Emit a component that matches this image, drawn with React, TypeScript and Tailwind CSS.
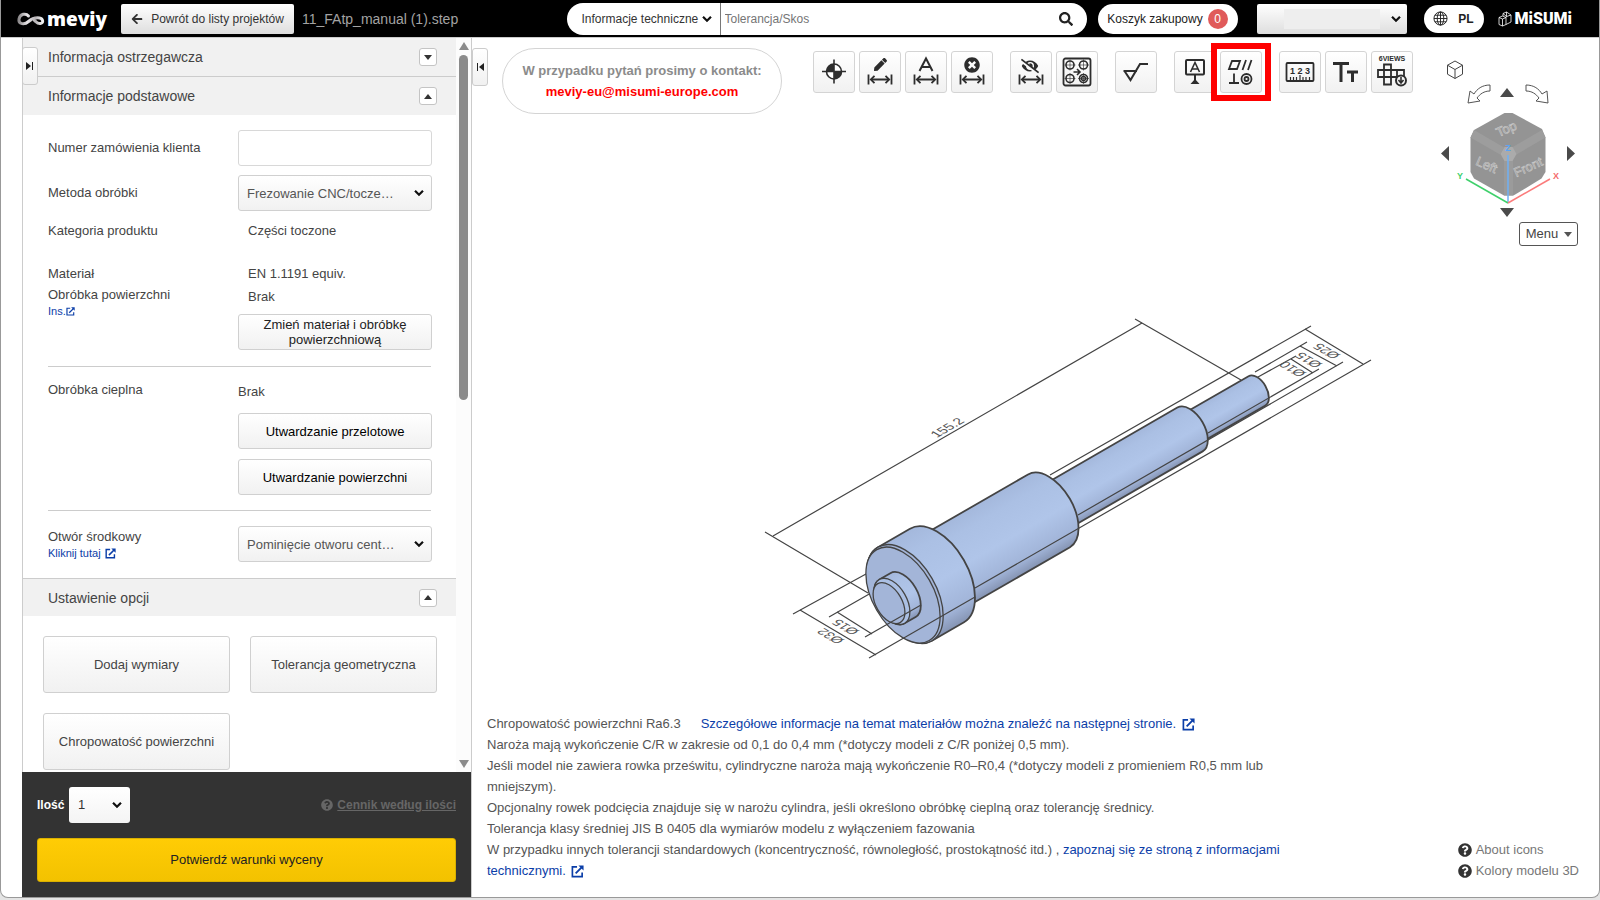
import React from 'react';
import { FaArrowLeft, FaSearch, FaQuestionCircle, FaPen, FaTimesCircle, FaEyeSlash } from 'react-icons/fa';
import { clsx } from 'clsx';

const INK = '#2d2d2d';

/* ---------- small shared pieces ---------- */

const Chevron = ({ className }: { className?: string }) => (
  <svg viewBox="0 0 10 7" className={clsx('pointer-events-none h-[7px] w-[10px]', className)} fill="none" stroke="#111" strokeWidth="2.2">
    <path d="M1 1.2 5 5.2 9 1.2" />
  </svg>
);

const LinkIcon = ({ className }: { className?: string }) => (
  <svg viewBox="0 0 14 14" className={clsx('inline-block', className)} fill="none" stroke="#0b3ea8" strokeWidth="1.8">
    <path d="M6.5 2H1.5v10.5H12V8" />
    <path d="M5 9 11.5 2.5" strokeWidth="2" />
    <path d="M8 .5h5.5V6z" fill="#0b3ea8" stroke="none" />
  </svg>
);

interface SelectBoxProps {
  id: string;
  options: string[];
  label?: string;
  className?: string;
  selectClassName?: string;
}

const SelectBox = ({ id, options, label, className, selectClassName }: SelectBoxProps) => (
  <div className={clsx('relative', className)}>
    <select id={id} aria-label={label} className={clsx('h-full w-full appearance-none outline-none', selectClassName)}>
      {options.map((option) => (
        <option key={option}>{option}</option>
      ))}
    </select>
    <Chevron className="absolute top-1/2 right-2 -translate-y-1/2" />
  </div>
);

const panelButton =
  'rounded-[3px] border border-[#d0d0d0] bg-linear-to-b from-white to-[#f1f1f1] text-[13px] leading-[15px]';

/* ---------- header ---------- */

const MeviyLogo = () => (
  <a href="#" className="flex w-[105px] items-center gap-px" aria-label="meviy">
    <svg viewBox="0 0 30 16" className="h-4 w-[30px]" fill="none">
      <defs>
        <linearGradient id="loop" x1="0" x2="1">
          <stop offset="0" stopColor="#8d8a8c" />
          <stop offset="0.35" stopColor="#e8e6e8" />
          <stop offset="0.7" stopColor="#b7b3b6" />
          <stop offset="1" stopColor="#f2f2f2" />
        </linearGradient>
      </defs>
      <path
        d="M12.500 5C10 2 4 2.500 3 8s5.500 6 9.500 2.500S20 6.500 23.500 7s4.500 5 1 5.500-4-1.500-6-3"
        stroke="url(#loop)"
        strokeWidth="3"
        strokeLinecap="round"
      />
    </svg>
    <span className="font-['Open_Sans',sans-serif] text-[19px] leading-5 font-extrabold text-white">meviy</span>
  </a>
);

const Globe = () => (
  <svg viewBox="0 0 16 16" className="size-[15px]" fill="none" stroke="#222" strokeWidth="1">
    <circle cx="8" cy="8" r="7" />
    <ellipse cx="8" cy="8" rx="3.5" ry="7" />
    <path d="M8 1v14M1 8h14M2 4.5h12M2 11.5h12" />
  </svg>
);

const MisumiLogo = () => (
  <a href="#" className="flex items-center gap-[3px]" aria-label="MISUMI">
    <svg viewBox="0 0 14 16" className="h-4 w-[14px]" fill="none" stroke="#fff" strokeWidth="0.8">
      <path d="M1 6.5 4.5 5 8 6.5v7L4.5 15 1 13.5zM1 6.5 4.5 8 8 6.5M4.5 8v7" />
      <path d="M5 5.2V2.5L8.5 1 13 4v7L8 13.5M8.5 1v4.5L13 4M8.5 5.5 8 6.5M5 2.5l3.5 3" />
    </svg>
    <span className="font-['Roboto',sans-serif] text-[16px] leading-5 font-black text-white">MiSUMi</span>
  </a>
);

const Header = () => (
  <header className="flex h-[37px] shrink-0 items-center bg-black pr-[27px] pl-[15px]">
    <MeviyLogo />
    <button className="flex h-[30px] w-[173px] items-center justify-center gap-2 rounded-[2px] bg-linear-to-b from-white to-[#dedede] text-xs text-[#333]">
      <FaArrowLeft className="size-3" />
      Powrót do listy projektów
    </button>
    <span className="ml-2 text-sm text-[#a3a3a3]">11_FAtp_manual (1).step</span>

    <div className="ml-auto flex items-center">
      <form className="flex h-8 w-[520px] items-center overflow-hidden rounded-full bg-white" onSubmit={(e) => e.preventDefault()}>
        <SelectBox
          id="search-scope"
          label="Zakres"
          options={['Informacje techniczne']}
          className="h-full w-[154px] border-r border-[#777]"
          selectClassName="pl-[15px] text-xs text-[#333]"
        />
        <input aria-label="Szukaj" placeholder="Tolerancja/Skos" className="h-full flex-1 px-1 text-xs outline-none placeholder:text-[#757575]" />
        <button aria-label="Szukaj" className="pr-[14px]">
          <FaSearch className="size-[14px] text-[#222]" />
        </button>
      </form>
      <button className="ml-[11px] flex h-[30px] w-[140px] items-center justify-center gap-[5px] rounded-full bg-white text-xs text-[#222]">
        Koszyk zakupowy
        <span className="flex size-5 items-center justify-center rounded-full bg-[#e05a5a] text-white">0</span>
      </button>
      <div className="relative ml-[19px] h-[30px] w-[150px]">
        <select aria-label="Konto" className="h-full w-full appearance-none rounded-[2px] bg-linear-to-b from-white to-[#dedede] outline-none">
          <option></option>
        </select>
        <span className="pointer-events-none absolute inset-y-[5px] left-[27px] w-24 bg-[#eee]" />
        <Chevron className="absolute top-1/2 right-[6px] -translate-y-1/2" />
      </div>
      <button className="mr-[14px] ml-[17px] flex h-7 w-[60px] items-center justify-center gap-[10px] rounded-full bg-white text-xs font-bold text-[#222]">
        <Globe />
        PL
      </button>
      <MisumiLogo />
    </div>
  </header>
);

/* ---------- sidebar ---------- */

interface SectionHeaderProps {
  title: string;
  open?: boolean;
  className?: string;
}

const SectionHeader = ({ title, open, className }: SectionHeaderProps) => (
  <div className={clsx('flex items-center justify-between bg-[#f1f1f1] pr-[19px] pl-[25px]', className)}>
    <h2 className="text-sm text-[#444]">{title}</h2>
    <button aria-label={title} aria-expanded={open} className="flex size-[18px] items-center justify-center rounded-[3px] border border-[#c4c4c4] bg-white">
      <svg viewBox="0 0 8 5" className={clsx('h-[5px] w-2', open && 'rotate-180')}>
        <path d="M0 0h8L4 5z" fill="#333" />
      </svg>
    </button>
  </div>
);

const BasicInfo = () => (
  <div className="px-[25px] text-[13px] leading-5 text-[#444]">
    <div className="grid grid-cols-[190px_194px] pt-[15px]">
      <label htmlFor="order-no" className="flex items-center">Numer zamówienia klienta</label>
      <input id="order-no" className="h-9 rounded-[3px] border border-[#d8d8d8] px-2 outline-none" />
    </div>
    <div className="mt-[9px] grid grid-cols-[190px_194px]">
      <label htmlFor="method" className="flex items-center">Metoda obróbki</label>
      <SelectBox id="method" options={['Frezowanie CNC/tocze…']} className="h-9" selectClassName={clsx(panelButton, 'pl-2 text-[#555]')} />
    </div>
    <div className="mt-[10px] grid grid-cols-[200px_184px]">
      <span>Kategoria produktu</span>
      <span>Części toczone</span>
    </div>
    <div className="mt-[23px] grid grid-cols-[200px_184px]">
      <span>Materiał</span>
      <span>EN 1.1191 equiv.</span>
    </div>
    <div className="mt-px grid grid-cols-[190px_194px] border-b border-[#ccc] pb-4">
      <div>
        Obróbka powierzchni
        <a href="#" className="flex items-center text-[11px] leading-3 text-[#0b3ea8]">
          Ins.
          <LinkIcon className="size-[9px]" />
        </a>
      </div>
      <div>
        <div className="pt-[2px] pb-[7px] pl-[10px]">Brak</div>
        <button className={clsx(panelButton, 'h-9 w-full px-4 text-[#222]')}>Zmień materiał i obróbkę powierzchniową</button>
      </div>
    </div>
    <div className="grid grid-cols-[190px_194px] border-b border-[#ccc] pt-[13px] pb-[15px]">
      <span>Obróbka cieplna</span>
      <div className="flex flex-col gap-[10px]">
        <span className="pt-[2px] pb-px">Brak</span>
        <button className={clsx(panelButton, 'h-9 text-black')}>Utwardzanie przelotowe</button>
        <button className={clsx(panelButton, 'h-9 text-black')}>Utwardzanie powierzchni</button>
      </div>
    </div>
    <div className="grid grid-cols-[190px_194px] pt-[15px] pb-4">
      <div className="pt-px">
        <label htmlFor="center-hole">Otwór środkowy</label>
        <a href="#" className="flex items-center gap-1 text-[11px] leading-3 text-[#0b3ea8]">
          Kliknij tutaj
          <LinkIcon className="size-[11px]" />
        </a>
      </div>
      <SelectBox id="center-hole" options={['Pominięcie otworu cent…']} className="h-9" selectClassName={clsx(panelButton, 'pl-2 text-[#555]')} />
    </div>
  </div>
);

const OPTION_BUTTONS = ['Dodaj wymiary', 'Tolerancja geometryczna', 'Chropowatość powierzchni'];

const Sidebar = () => (
  <aside className="relative flex w-[449px] shrink-0 flex-col border-l border-[#ccc]">
    <div className="flex min-h-0 flex-1">
      <div className="min-h-0 flex-1 overflow-hidden">
        <SectionHeader title="Informacja ostrzegawcza" className="h-[39px] border-b border-[#ccc]" />
        <SectionHeader title="Informacje podstawowe" open className="h-[38px]" />
        <BasicInfo />
        <SectionHeader title="Ustawienie opcji" open className="h-[38px] border-t border-[#ccc]" />
        <div className="grid grid-cols-2 gap-5 py-5 pr-[19px] pl-5">
          {OPTION_BUTTONS.map((label) => (
            <button key={label} className={clsx(panelButton, 'h-[57px] text-[#444]')}>{label}</button>
          ))}
        </div>
      </div>
      {/* Scroll track */}
      <div className="flex w-[15px] flex-col items-center bg-[#fcfcfc] pt-1 pb-1">
        <svg viewBox="0 0 10 8" className="h-2 w-[10px]"><path d="M5 0 10 8H0z" fill="#8b8b8b" /></svg>
        <div className="mt-[5px] h-[345px] w-[9px] rounded-full bg-[#8b8b8b]" />
        <svg viewBox="0 0 10 8" className="mt-auto h-2 w-[10px]"><path d="M0 0h10L5 8z" fill="#8b8b8b" /></svg>
      </div>
    </div>

    <div className="-ml-px bg-[#333] p-[15px] text-[13px]">
      <div className="flex items-center">
        <label htmlFor="qty" className="w-8 text-xs font-bold text-white">Ilość</label>
        <SelectBox id="qty" options={['1']} className="h-9 w-[61px]" selectClassName="rounded-[3px] bg-linear-to-b from-white to-[#f4f4f4] pl-[9px] text-[#333]" />
        <a href="#" className="ml-auto flex items-center gap-1 text-xs font-bold text-[#666]">
          <FaQuestionCircle className="size-3" />
          <span className="underline">Cennik według ilości</span>
        </a>
      </div>
      <button className="mt-[15px] h-11 w-full rounded-[3px] border border-[#d9b000] bg-linear-to-b from-[#ffcc05] to-[#f3c200] text-[#222]">
        Potwierdź warunki wyceny
      </button>
    </div>

    <button aria-label="Zwiń panel" className="absolute top-[9px] -left-px flex h-[38px] w-4 items-center justify-center rounded-[3px] border border-[#ccc] bg-linear-to-b from-white to-[#f1f1f1]">
      <svg viewBox="0 0 8 8" className="size-2"><path d="M0 0l5 4-5 4zM6 0h1v8H6z" fill="#222" /></svg>
    </button>
  </aside>
);

/* ---------- toolbar icons, all on a 34px grid ---------- */

const Span = () => (
  <g stroke={INK} strokeWidth="1.8" fill="none">
    <path d="M5.5 19.5v10M28.5 19.5v10M8 24.5h18" />
    <path d="M11.5 20.8 7.8 24.5l3.7 3.7M22.5 20.8l3.7 3.7-3.7 3.7" />
  </g>
);

const TOOL_GROUPS: { name: string; icon: React.ReactNode; marked?: boolean }[][] = [
  [
    {
      name: 'Punkt odniesienia',
      icon: (
        <g>
          <circle cx="17" cy="16.5" r="7.5" fill="#fff" stroke={INK} strokeWidth="1.6" />
          <path d="M17 16.5V9a7.5 7.5 0 0 0-7.5 7.5zM17 16.5V24a7.5 7.5 0 0 0 7.5-7.5z" fill={INK} />
          <path d="M17 4.5v24M5 16.5h24" stroke={INK} strokeWidth="1.6" />
        </g>
      ),
    },
    { name: 'Edytuj wymiar', icon: <g><Span /><FaPen x="11" y="3" size={13} color={INK} /></g> },
    { name: 'Auto wymiar', icon: <g><Span /><path d="M10.5 16 17 3.5 23.5 16M13 12h8" fill="none" stroke={INK} strokeWidth="2" /></g> },
    { name: 'Usuń wymiar', icon: <g><Span /><FaTimesCircle x="9" y="2" size={16} color={INK} /></g> },
  ],
  [
    { name: 'Ukryj wymiary', icon: <g><Span /><FaEyeSlash x="7" y="2" size={18} color={INK} /></g> },
    {
      name: 'Szyk otworów',
      icon: (
        <g fill="none" stroke={INK}>
          <rect x="3.5" y="3.5" width="27" height="27" rx="2" strokeWidth="1.8" />
          {[[10, 10], [23.5, 10], [10, 23.5], [23.5, 23.5]].map(([x, y]) => (
            <g key={`${x}-${y}`}>
              <circle cx={x} cy={y} r="4" strokeWidth="1.6" />
              <path d={`M${x - 5.5} ${y}h11M${x} ${y - 5.5}v11`} strokeWidth="0.6" />
            </g>
          ))}
          <circle cx="23.5" cy="23.5" r="2" strokeWidth="1.6" />
          <path d="M13.5 17h6M17 14l3 3-3 3" strokeWidth="1.6" />
        </g>
      ),
    },
  ],
  [{ name: 'Chropowatość', icon: <path d="M4.5 16H18M5.5 16l6 9L21 9h8" fill="none" stroke={INK} strokeWidth="2" /> }],
  [
    {
      name: 'Baza',
      icon: (
        <g fill="none" stroke={INK} strokeWidth="2">
          <rect x="8" y="5" width="18" height="14.5" rx="1" />
          <path d="M12.5 17 17 7.5 21.5 17M14.2 14h5.6" strokeWidth="1.6" />
          <path d="M17 20v6" />
          <path d="M17 24l4.5 5h-9z" fill={INK} stroke="none" />
        </g>
      ),
    },
    {
      name: 'Tolerancja geometryczna',
      marked: true,
      icon: (
        <g fill="none" stroke={INK} strokeWidth="1.8">
          <path d="M8 6h8l-3 8H5zM22 5l-3.500 10M27.500 5 24 15M10 18.500V28M5 28h10" />
          <circle cx="22.500" cy="24" r="5" />
          <circle cx="22.500" cy="24" r="2" />
        </g>
      ),
    },
  ],
  [
    {
      name: 'Pomiar',
      icon: (
        <g fill="none" stroke={INK}>
          <rect x="3.5" y="8" width="27" height="18" rx="1" strokeWidth="1.8" />
          <path d="M7.5 25v-3M10.5 25v-3M13.5 25v-3M17 25v-5M20 25v-3M23 25v-3M26.5 25v-3" strokeWidth="1.2" />
          <text x="17" y="18.5" textAnchor="middle" fontSize="9" fontWeight="700" fill={INK} stroke="none">1 2 3</text>
        </g>
      ),
    },
    { name: 'Tekst', icon: <path d="M4 8.5h16M12 8.5V27M18 17h11M23.5 17v10" fill="none" stroke={INK} strokeWidth="3" /> },
    {
      name: 'Sześć widoków',
      icon: (
        <g fill="none" stroke={INK} strokeWidth="1.8">
          <text x="17" y="6" textAnchor="middle" fontSize="7" fontWeight="700" fill={INK} stroke="none">6VIEWS</text>
          <path d="M9 9.5h7v5.500h13v7H16V29.500H9V22H3v-7h6zM9 15h7v7H9zM22 15v7" />
          <circle cx="26" cy="25.5" r="5" fill="#f5f5f5" strokeWidth="2" />
          <path d="M26 22v5M23.5 25l2.5 3 2.5-3" strokeWidth="1.6" />
        </g>
      ),
    },
  ],
];

const Toolbar = () => (
  <div className="mt-[13px] flex gap-[17px]">
    {TOOL_GROUPS.map((group) => (
      <div key={group[0].name} className="flex gap-1">
        {group.map((tool) => (
          <div key={tool.name} className="relative">
            <button aria-label={tool.name} className="flex size-[42px] items-center justify-center rounded-[3px] border border-[#d4d4d4] bg-linear-to-b from-white to-[#f1f1f1]">
              <svg viewBox="0 0 34 34" className="size-[34px] shrink-0 font-['Liberation_Sans',sans-serif]">{tool.icon}</svg>
            </button>
            {tool.marked && <span className="pointer-events-none absolute -inset-x-[9px] -inset-y-[8px] border-[6px] border-[#fe0000]" />}
          </div>
        ))}
      </div>
    ))}
  </div>
);

/* ---------- orientation cube ---------- */

const ViewCube = () => (
  <svg viewBox="1436 56 142 164" className="h-[164px] w-[142px] font-['Liberation_Sans',sans-serif]" fill="none">
    <path d="M1455 61l7.500 4.200v9L1455 78.500l-7.500-4.300v-9zM1447.500 65.200l7.500 4.300 7.500-4.300M1455 69.500v9" stroke="#444" strokeWidth="1" />
    <path d="M1490 85c-8 0-13 4-16 9l-4-3-2 12 12-2-3-3c3-4 7-7 13-7zM1526 85c8 0 13 4 16 9l5-3 1 12-12-2 3-3c-3-4-7-7-13-7z" stroke="#555" strokeWidth="1" />
    <path d="M1507 88l7 9h-14zM1507 217l7-9h-14zM1441 153.500l8-7.500v15zM1575 153.500l-8-7.500v15z" fill="#4a4a4a" />

    <path d="M1504.500 113h8l29.500 16 3.500 8.500v34.500l-4 6.500-28 17h-9.500l-30-17-3.500-6.500v-34.500l3.500-7.500z" fill="#949494" />
    <path d="M1474 130l30 17.500-4 7-29.500-17zM1542 130l-30 17.500 4.500 7 29-17z" fill="#9d9d9d" />
    <path d="M1504 160h9v35.500h-9z" fill="#9b9b9b" />
    <path d="M1504.500 147h8l4 7-4 7h-8l-4-7z" fill="#ababab" />
    <g fill="none" stroke="#c9c9c9" strokeWidth="0.6" fontSize="13" textAnchor="middle">
      <text transform="translate(1508 133) rotate(-24)">Top</text>
      <text transform="translate(1485 169) rotate(24)">Left</text>
      <text transform="translate(1530 171) rotate(-24)">Front</text>
    </g>

    <path d="M1508 203v-48" stroke="#6fb0f5" strokeWidth="1.5" />
    <path d="M1508 203l-42-24" stroke="#3fd06b" strokeWidth="1.5" />
    <path d="M1508 203l42-24" stroke="#fb7b7b" strokeWidth="1.5" />
    <g fontSize="9" fontWeight="700" textAnchor="middle">
      <text x="1508" y="151" fill="#5aa5f5">Z</text>
      <text x="1460" y="179" fill="#3fd06b">Y</text>
      <text x="1556" y="179" fill="#f56b6b">X</text>
    </g>
  </svg>
);

/* ---------- turned part ---------- */

const HEAD = { x: 904, y: 594.5 };
const SLOPE = 0.577;

// a point on the shaft axis for a given x
const onAxis = (x: number) => ({ x, y: HEAD.y - (x - HEAD.x) * SLOPE });

const Cylinder = ({ from, to, r }: { from: number; to: number; r: number }) => {
  const a = onAxis(from);
  const b = onAxis(to);
  const dx = r * 0.5;
  const dy = r * 0.866;
  const id = `steel-${from}`;
  const minor = r * SLOPE;
  return (
    <g>
      <linearGradient id={id} gradientUnits="userSpaceOnUse" x1={b.x - dx} y1={b.y - dy} x2={b.x + dx} y2={b.y + dy}>
        <stop offset="0" stopColor="#a4b8dc" />
        <stop offset="0.2" stopColor="#abc0e4" />
        <stop offset="0.55" stopColor="#b0c5e9" />
        <stop offset="0.85" stopColor="#a2b5d9" />
        <stop offset="1" stopColor="#8594b3" />
      </linearGradient>
      <path
        d={`M${a.x - dx} ${a.y - dy}L${b.x - dx} ${b.y - dy}A${r} ${minor} 60 0 1 ${b.x + dx} ${b.y + dy}L${a.x + dx} ${a.y + dy}A${r} ${minor} 60 0 1 ${a.x - dx} ${a.y - dy}z`}
        fill={`url(#${id})`}
        stroke="#444"
        strokeWidth="1.8"
      />
    </g>
  );
};

const Face = ({ at, r, fill = '#a3b5d8' }: { at: number; r: number; fill?: string }) => {
  const c = onAxis(at);
  return <ellipse cx={c.x} cy={c.y} rx={r} ry={r * SLOPE} transform={`rotate(60 ${c.x} ${c.y})`} fill={fill} stroke="#444" strokeWidth="1.3" />;
};

const DIAMETERS = [
  { label: 'Ø32', x: 845, y: 640 },
  { label: 'Ø15', x: 860, y: 631 },
  { label: 'Ø25', x: 1341, y: 355 },
  { label: 'Ø15', x: 1323, y: 364 },
  { label: 'Ø10', x: 1307, y: 373 },
];

const PartView = () => (
  <svg viewBox="758 310 620 360" className="h-[360px] w-[620px] font-['Liberation_Sans',sans-serif]" fill="none">
    <path d="M1050 475 1311 326M1255 372l52-30M1258 377l38-21M765 532l103 61M1135 319l106 61M793 614l73-40M829 617l42-24" stroke="#444" strokeWidth="1.2" />
    <Cylinder from={1190} to={1257} r={16.9} />
    <Cylinder from={1049} to={1190} r={25.3} />
    <Cylinder from={937} to={1049} r={42} />
    <Cylinder from={905} to={937} r={54} />
    <Face at={905} r={54} />
    <Face at={903} r={52.5} />
    <Cylinder from={892} to={903} r={25.3} />
    <Face at={892} r={25.3} fill="#abc0e4" />
    <Face at={889} r={22.5} />
    <g stroke="#444" strokeWidth="1.2">
      <path d="M773 536 1142 323M869 658l106-61M800 610l76 45M865 637l56-32M837 612l35 22" />
      <path d="M975 588 1371 360M1305 329l58 35M1078 515l265-153M1300 346l37 20M1208 433l111-64M1291 359l22 14" />
    </g>
    <g fontSize="13" fill="#555">
      <text transform="matrix(0.866 -0.5 0.866 0.5 937 438)">155.2</text>
      {DIAMETERS.map((d) => (
        <text key={`${d.label}-${d.x}`} transform={`matrix(-0.866 -0.5 0.866 -0.5 ${d.x} ${d.y})`}>{d.label}</text>
      ))}
    </g>
  </svg>
);

/* ---------- viewer ---------- */

const Notes = () => (
  <div className="max-w-[805px] text-[13px] leading-[21px] text-[#555]">
    <p>
      <span className="mr-5">Chropowatość powierzchni Ra6.3</span>
      <a href="#" className="text-[#0b3ea8]">Szczegółowe informacje na temat materiałów można znaleźć na następnej stronie. <LinkIcon className="ml-[2px] size-[13px]" /></a>
    </p>
    <p>Naroża mają wykończenie C/R w zakresie od 0,1 do 0,4 mm (*dotyczy modeli z C/R poniżej 0,5 mm).</p>
    <p>Jeśli model nie zawiera rowka prześwitu, cylindryczne naroża mają wykończenie R0–R0,4 (*dotyczy modeli z promieniem R0,5 mm lub mniejszym).</p>
    <p>Opcjonalny rowek podcięcia znajduje się w narożu cylindra, jeśli określono obróbkę cieplną oraz tolerancję średnicy.</p>
    <p>Tolerancja klasy średniej JIS B 0405 dla wymiarów modelu z wyłączeniem fazowania</p>
    <p>
      W przypadku innych tolerancji standardowych (koncentryczność, równoległość, prostokątność itd.) ,{' '}
      <a href="#" className="text-[#0b3ea8]">zapoznaj się ze stroną z informacjami technicznymi. <LinkIcon className="ml-[2px] size-[13px]" /></a>
    </p>
  </div>
);

const Viewer = () => (
  <main className="flex min-w-0 flex-1 flex-col border-l border-[#ccc]">
    <div className="flex items-start">
      <button aria-label="Zwiń widok" className="mt-[10px] flex h-[38px] w-4 shrink-0 items-center justify-center rounded-[3px] border border-[#ccc] bg-linear-to-b from-white to-[#f1f1f1]">
        <svg viewBox="0 0 8 8" className="size-2"><path d="M8 0L3 4l5 4zM1 0h1v8H1z" fill="#222" /></svg>
      </button>
      <div className="mt-[10px] ml-[14px] flex h-[66px] w-[280px] shrink-0 flex-col items-center justify-center rounded-full border border-[#d4d4d4] text-[13px] leading-[21px] font-bold">
        <span className="text-[#8b8b8b]">W przypadku pytań prosimy o kontakt:</span>
        <a href="mailto:meviy-eu@misumi-europe.com" className="text-[#f00]">meviy-eu@misumi-europe.com</a>
      </div>
      <div className="ml-[31px]">
        <Toolbar />
      </div>
      <div className="mr-[21px] ml-auto flex flex-col items-end pt-[18px]">
        <ViewCube />
        <button className="mt-[2px] flex h-6 w-[59px] items-center justify-center gap-[6px] rounded-[3px] border border-[#555] pl-px text-[13px] text-[#444]">
          Menu
          <svg viewBox="0 0 8 5" className="h-[5px] w-2"><path d="M0 0h8L4 5z" fill="#555" /></svg>
        </button>
      </div>
    </div>

    <div className="flex min-h-0 flex-1 items-center justify-center pt-5 pl-16">
      <PartView />
    </div>

    <div className="flex items-end justify-between pr-5 pb-4 pl-[15px]">
      <Notes />
      <ul className="text-[13px] leading-[21px] text-[#777]">
        {['About icons', 'Kolory modelu 3D'].map((label) => (
          <li key={label}>
            <a href="#" className="flex items-center gap-1">
              <FaQuestionCircle className="size-[14px] text-[#333]" />
              {label}
            </a>
          </li>
        ))}
      </ul>
    </div>
  </main>
);

export default function App() {
  return (
    <div className="h-screen bg-[#e4e4e4] pb-[2px] font-['Liberation_Sans',Arial,sans-serif]">
      <div className="flex h-full flex-col overflow-hidden rounded-b-lg border border-t-0 border-[#999] bg-white">
        <Header />
        <div className="flex min-h-0 flex-1 border-t border-[#ccc] pl-[21px]">
          <Sidebar />
          <Viewer />
        </div>
      </div>
    </div>
  );
}
